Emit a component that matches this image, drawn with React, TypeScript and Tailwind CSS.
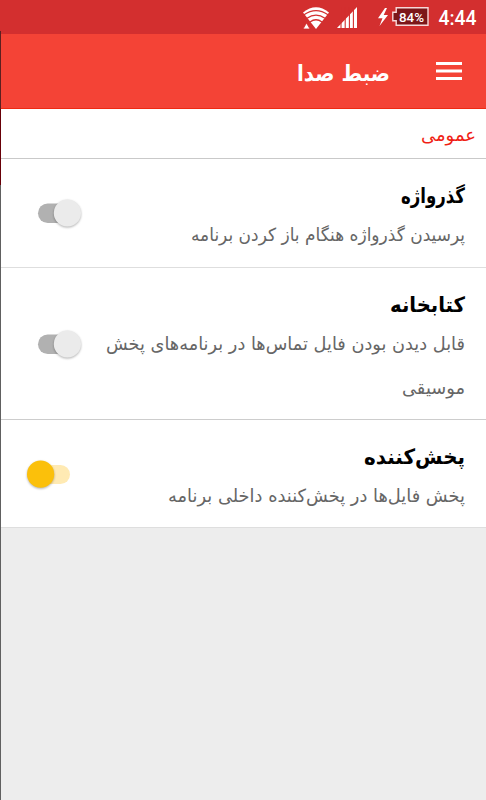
type SwitchProps = { on?: boolean };

function Switch({ on }: SwitchProps) {
  return (
    <svg width="60" height="36" viewBox="0 0 60 36" className="mb-[8px] block overflow-visible">
      {on ? (
        <>
          <rect x="9" y="9" width="42" height="19" rx="9.5" fill="#ffeab3" />
          <circle cx="21.6" cy="18.2" r="13.6" fill="#fbc00b" className="drop-shadow-[0_1.5px_1px_rgba(0,0,0,0.3)]" />
        </>
      ) : (
        <>
          <rect x="19" y="8.5" width="42" height="19.5" rx="9.7" fill="#b1b1b1" />
          <circle cx="48.4" cy="18" r="13.6" fill="#ebebeb" className="drop-shadow-[0_1.5px_1px_rgba(0,0,0,0.3)]" />
        </>
      )}
    </svg>
  );
}

type FitProps = { text: string; width: number; className: string };

function Fit({ text, width, className }: FitProps) {
  return (
    <svg width={width} height="44" className="block overflow-visible" direction="rtl">
      <text x={width} y="28" textLength={width} lengthAdjust="spacingAndGlyphs" className={className}>
        {text}
      </text>
    </svg>
  );
}

type Line = { text: string; width: number };
type RowProps = { title: Line; lines: Line[]; on?: boolean; className: string };

function Row({ title, lines, on, className }: RowProps) {
  return (
    <section className={`flex items-center justify-between bg-white pl-[19px] pr-[21px] ${className}`}>
      <div className="text-right">
        <div className="flex h-[36px] items-center pt-[3px]">
          <Fit {...title} className="fill-black text-[21px] font-bold" />
        </div>
        {lines.map((l) => (
          <div key={l.text} className="flex h-[44px] items-center">
            <Fit {...l} className="fill-[#666666] text-[18px]" />
          </div>
        ))}
      </div>
      <Switch on={on} />
    </section>
  );
}

function StatusBar() {
  return (
    <div className="h-[34px] bg-[#d32f2f]" dir="ltr">
      <svg width="486" height="34" className="block" fill="#fff">
        <path d="M303 12.5Q316 2 329 12.5L316 29Z" />
        <g fill="none" stroke="#d32f2f" strokeWidth="1.3">
          <path d="M304 14.8Q316 6.5 328 14.8" />
          <path d="M307 18.3Q316 12 325 18.3" />
          <path d="M310 22Q316 17.5 322 22" />
        </g>
        <path d="M303 29L306.5 23L310 29Z" stroke="#d32f2f" strokeWidth="0.8" />
        <path d="M337 28L357 7V28Z" />
        <path d="M341 7V29M345.2 7V29M349.4 7V29M353.4 7V29" stroke="#d32f2f" strokeWidth="1.1" />
        <path d="M385 8L378 18.2H382.5L379.5 26L388 15H383.7L387 8Z" />
        <path d="M396.2 7.8H428V25.2H396.2V20.7H392.8V12.3H396.2Z" fill="#7c1719" stroke="#f7d9d9" strokeWidth="1.4" />
        <text x="399" y="21.5" textLength="25" lengthAdjust="spacingAndGlyphs" className="font-[Roboto] text-[13.5px] font-medium">84%</text>
        <text x="438.5" y="24.5" textLength="38" lengthAdjust="spacingAndGlyphs" className="font-[Roboto] text-[19.5px] font-medium">4:44</text>
      </svg>
    </div>
  );
}

export default function App() {
  return (
    <main dir="rtl" className="relative h-[800px] w-[486px] overflow-hidden bg-[#ededed] font-['DejaVu_Sans',sans-serif]">
      <StatusBar />
      <header className="flex h-[75px] items-center border-b border-[#ee2a12] bg-[#f44336] pr-[24px]">
        <svg width="26" height="18" className="block" fill="#fff">
          <path d="M0 0H26V3H0ZM0 7.5H26V10.5H0ZM0 15H26V18H0Z" />
        </svg>
        <h1 className="mr-[46px] pt-[7px]">
          <Fit text="ضبط صدا" width={93} className="fill-white text-[22px] font-bold" />
        </h1>
      </header>
      <div className="flex h-[50px] items-center border-b border-[#c9c9c9] bg-white pr-[10px] pt-[2px]">
        <Fit text="عمومی" width={55} className="fill-[#f01f16] text-[18px]" />
      </div>
      <Row
        className="h-[109px] border-b border-[#dedede] pt-[18px] pb-[10px]"
        title={{ text: "گذرواژه", width: 64 }}
        lines={[{ text: "پرسیدن گذرواژه هنگام باز کردن برنامه", width: 274 }]}
      />
      <Row
        className="h-[152px] border-b border-[#cdcdcd] pt-[18px] pb-[9px]"
        title={{ text: "کتابخانه", width: 75 }}
        lines={[
          { text: "قابل دیدن بودن فایل تماس‌ها در برنامه‌های پخش", width: 359 },
          { text: "موسیقی", width: 63 },
        ]}
      />
      <Row
        on
        className="h-[108px] border-b border-[#dedede] pt-[18px] pb-[9px]"
        title={{ text: "پخش‌کننده", width: 101 }}
        lines={[{ text: "پخش فایل‌ها در پخش‌کننده داخلی برنامه", width: 297 }]}
      />
      <div className="absolute left-0 top-[31px] flex h-[769px] w-px flex-col">
        <span className="h-[78px] bg-[#5c2020]" />
        <span className="h-[76px] bg-[#680008]" />
        <span className="grow bg-[#606060]" />
      </div>
    </main>
  );
}
